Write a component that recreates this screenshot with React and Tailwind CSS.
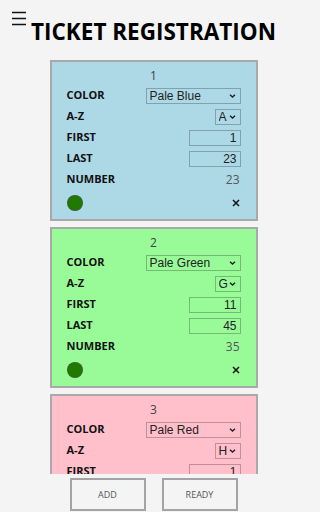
import { useState } from 'react'

const COLORS = [
  { name: 'Pale Blue', bg: 'bg-[#add8e6]' },
  { name: 'Pale Green', bg: 'bg-[#98fb98]' },
  { name: 'Pale Red', bg: 'bg-[#ffc0cb]' },
]

const LETTERS = 'ABCDEFGHIJKLMNOPQRSTUVWXYZ'.split('')

const initialTickets = [
  { id: 1, color: 'Pale Blue', letter: 'A', first: 1, last: 23 },
  { id: 2, color: 'Pale Green', letter: 'G', first: 11, last: 45 },
  { id: 3, color: 'Pale Red', letter: 'H', first: 1, last: 20 },
]

function Chevron() {
  return (
    <svg
      className="pointer-events-none absolute right-[5px] top-1/2 -translate-y-1/2"
      width="7"
      height="5"
      viewBox="0 0 7 5"
      fill="none"
    >
      <path d="M1 1.2 L3.5 3.6 L6 1.2" stroke="#222" strokeWidth="1.4" />
    </svg>
  )
}

function Select({ value, options, className, onChange }) {
  return (
    <div className={`relative ${className}`}>
      <select
        value={value}
        onChange={(e) => onChange(e.target.value)}
        className="block h-4 w-full appearance-none border border-black/25 bg-transparent py-0 pl-[3px] font-['Liberation_Sans',Arial,sans-serif] text-[12px] leading-[14px] text-[#222] outline-none"
      >
        {options.map((o) => (
          <option key={o} value={o}>
            {o}
          </option>
        ))}
      </select>
      <Chevron />
    </div>
  )
}

function Row({ label, children }) {
  return (
    <div className="flex h-[21px] items-center justify-between">
      <span className="text-[11px] font-bold text-[#111]">{label}</span>
      {children}
    </div>
  )
}

function NumberInput({ value, onChange }) {
  return (
    <input
      value={value}
      onChange={(e) => onChange(Number(e.target.value) || 0)}
      className="block h-4 w-[52px] border border-black/25 bg-transparent py-0 pr-[3px] text-right font-['Liberation_Sans',Arial,sans-serif] text-[12px] leading-[14px] text-[#222] outline-none"
    />
  )
}

function TicketCard({ ticket, onChange, onRemove }) {
  const bg = COLORS.find((c) => c.name === ticket.color)?.bg ?? 'bg-white'
  const count = Math.max(0, ticket.last - ticket.first + 1)

  return (
    <div className={`shrink-0 border-2 border-[#a9a9a9] ${bg} px-[15px] pt-[6px] pb-[3px]`}>
      <div className="h-4 text-center text-[12px] leading-4 text-[#444]">{ticket.id}</div>
      <div className="mt-px">
        <Row label="COLOR">
          <Select
            className="w-[95px]"
            value={ticket.color}
            options={COLORS.map((c) => c.name)}
            onChange={(v) => onChange({ ...ticket, color: v })}
          />
        </Row>
        <Row label="A-Z">
          <Select
            className="w-[26px]"
            value={ticket.letter}
            options={LETTERS}
            onChange={(v) => onChange({ ...ticket, letter: v })}
          />
        </Row>
        <Row label="FIRST">
          <NumberInput value={ticket.first} onChange={(v) => onChange({ ...ticket, first: v })} />
        </Row>
        <Row label="LAST">
          <NumberInput value={ticket.last} onChange={(v) => onChange({ ...ticket, last: v })} />
        </Row>
        <Row label="NUMBER">
          <span className="pr-px text-[12px] text-[#555]">{count}</span>
        </Row>
      </div>
      <div className="flex h-[26px] items-center justify-between">
        <span className="size-4 rounded-full border border-[#4a4a4a]/60 bg-[#1f7a00]" />
        <button type="button" onClick={onRemove} aria-label="Remove" className="mr-px">
          <svg width="8" height="8" viewBox="0 0 8 8">
            <path d="M1 1 L7 7 M7 1 L1 7" stroke="#111" strokeWidth="1.5" />
          </svg>
        </button>
      </div>
    </div>
  )
}

export default function App() {
  const [tickets, setTickets] = useState(initialTickets)

  const update = (t) => setTickets((ts) => ts.map((x) => (x.id === t.id ? t : x)))
  const remove = (id) => setTickets((ts) => ts.filter((x) => x.id !== id))
  const add = () =>
    setTickets((ts) => [
      ...ts,
      { id: ts.length + 1, color: 'Pale Blue', letter: 'A', first: 1, last: 1 },
    ])

  return (
    <div className="min-h-screen w-full bg-[#f4f4f4]">
      <div className="flex h-[512px] w-[307px] flex-col overflow-hidden font-['Open_Sans',sans-serif]">
        <header className="relative shrink-0 pt-[17px] pb-[13px]">
          <svg className="absolute left-3 top-[11px]" width="14" height="15" viewBox="0 0 14 15">
            <path d="M0 1.5 H14 M0 7.5 H14 M0 13.5 H14" stroke="#111" strokeWidth="1.3" />
          </svg>
          <h1 className="h-[30px] text-center text-[22.5px] font-bold leading-[30px] text-black">
            TICKET REGISTRATION
          </h1>
        </header>

        <main className="min-h-0 flex-1 overflow-y-auto [scrollbar-width:none]">
          <div className="mx-auto flex w-[208px] flex-col gap-[6px] pb-4">
            {tickets.map((t) => (
              <TicketCard key={t.id} ticket={t} onChange={update} onRemove={() => remove(t.id)} />
            ))}
          </div>
        </main>

        <footer className="flex h-[38px] shrink-0 justify-center gap-4 pt-1">
          <button
            type="button"
            onClick={add}
            className="h-[33px] w-[76px] border-2 border-[#a3a3a3] text-[9px] text-[#555]"
          >
            ADD
          </button>
          <button
            type="button"
            className="h-[33px] w-[76px] border-2 border-[#a3a3a3] text-[9px] text-[#555]"
          >
            READY
          </button>
        </footer>
      </div>
    </div>
  )
}
